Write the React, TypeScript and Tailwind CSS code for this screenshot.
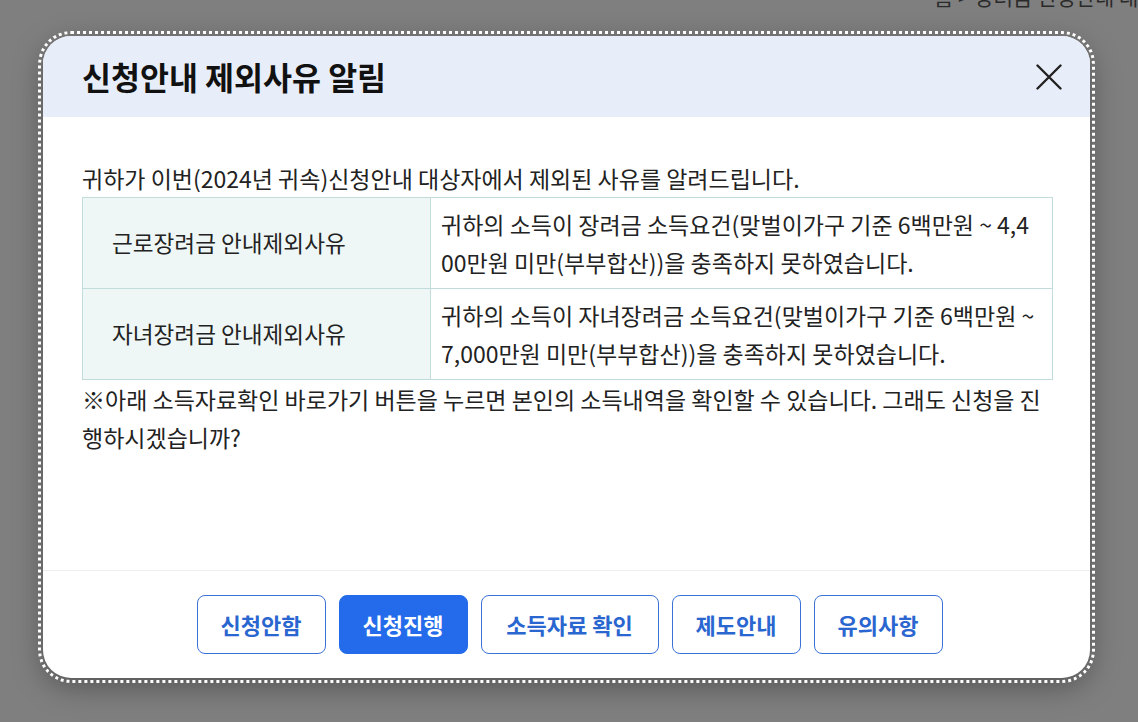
const rows = [
  {
    label: "근로장려금 안내제외사유",
    lines: [
      "귀하의 소득이 장려금 소득요건(맞벌이가구 기준 6백만원 ~ 4,4",
      "00만원 미만(부부합산))을 충족하지 못하였습니다.",
    ],
  },
  {
    label: "자녀장려금 안내제외사유",
    lines: [
      "귀하의 소득이 자녀장려금 소득요건(맞벌이가구 기준 6백만원 ~",
      "7,000만원 미만(부부합산))을 충족하지 못하였습니다.",
    ],
  },
];

const buttons = [
  { label: "신청안함", width: "w-[129px]" },
  { label: "신청진행", width: "w-[129px]", primary: true },
  { label: "소득자료 확인", width: "w-[178px]" },
  { label: "제도안내", width: "w-[129px]" },
  { label: "유의사항", width: "w-[129px]" },
];

export default function App() {
  return (
    <div className="relative h-[722px] w-full overflow-hidden bg-white font-['Noto_Sans_CJK_KR',sans-serif]">
      {/* page behind the overlay */}
      <div className="-mt-[16px] whitespace-nowrap pl-[934px] text-[21px] leading-[24px] text-[#555]">
        홈 &gt; 장려금 신청안내 대상자
      </div>

      {/* dimmed overlay + dialog */}
      <div className="absolute inset-0 bg-black/50 pl-[43px] pt-[36px]">
        <div className="flex h-[642px] w-[1047px] flex-col overflow-hidden rounded-[28px] bg-white shadow-[0_8px_30px_rgba(0,0,0,0.35)] outline-3 outline-offset-2 outline-dotted outline-white">
          {/* Header */}
          <div className="flex h-[81px] shrink-0 items-center justify-between bg-[#e8eef9] pl-[39px] pr-[28px]">
            <h2 className="text-[31.5px] font-bold leading-none text-[#111]">
              신청안내 제외사유 알림
            </h2>
            <button aria-label="닫기" className="text-[#222]">
              <svg width="26" height="26" viewBox="0 0 26 26" fill="none" stroke="currentColor" strokeWidth="2.4" strokeLinecap="round">
                <path d="M1.5 1.5 L24.5 24.5 M24.5 1.5 L1.5 24.5" />
              </svg>
            </button>
          </div>

          {/* Body */}
          <div className="flex-1 pl-[39px] pt-[42px] text-[23px] leading-[38px] text-[#222]">
            <p>귀하가 이번(2024년 귀속)신청안내 대상자에서 제외된 사유를 알려드립니다.</p>
            <table className="w-[971px] border-collapse border border-[#c2dcdc]">
              <tbody>
                {rows.map((row) => (
                  <tr key={row.label} className="h-[91px]">
                    <td className="w-[348px] border border-[#c2dcdc] bg-[#eef7f6] pl-[29px] text-[22.6px] align-middle">
                      {row.label}
                    </td>
                    <td className="border border-[#c2dcdc] py-[7px] pl-[10px] pr-[4px] align-middle whitespace-nowrap">
                      {row.lines[0]}
                      <br />
                      {row.lines[1]}
                    </td>
                  </tr>
                ))}
              </tbody>
            </table>
            <p className="w-[971px] break-all">
              ※아래 소득자료확인 바로가기 버튼을 누르면 본인의 소득내역을 확인할 수 있습니다. 그래도 신청을 진행하시겠습니까?
            </p>
          </div>

          {/* Footer */}
          <div className="flex shrink-0 justify-center gap-[13px] border-t border-[#eeeeee] pl-[6px] py-[24px]">
            {buttons.map((b) => (
              <button
                key={b.label}
                className={
                  b.primary
                    ? `${b.width} h-[59px] rounded-[8px] border border-[#236bea] bg-[#236bea] text-[22px] font-semibold text-white`
                    : `${b.width} h-[59px] rounded-[8px] border border-[#3a72d8] bg-white text-[22px] font-semibold text-[#2a66d0]`
                }
              >
                {b.label}
              </button>
            ))}
          </div>
        </div>
      </div>
    </div>
  );
}
